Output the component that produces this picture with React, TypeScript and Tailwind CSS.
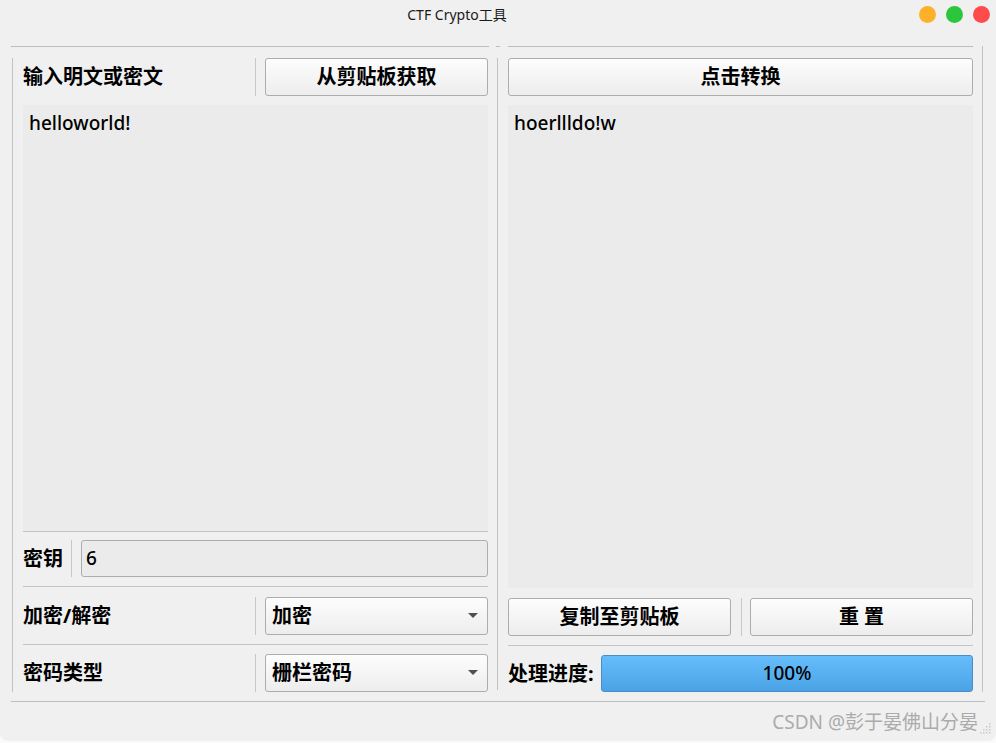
import React from "react";

const F = "font-['Noto_Sans','Noto_Sans_CJK_SC',sans-serif]";

function Btn({ children, className = "" }: { children: React.ReactNode; className?: string }) {
  return (
    <div
      className={`h-[38px] flex items-center justify-center rounded-[3px] border border-[#adadad] bg-linear-to-b from-[#fdfdfd] to-[#ededed] text-[20px] font-bold text-black leading-none ${className}`}
    >
      {children}
    </div>
  );
}

function Combo({ text }: { text: string }) {
  return (
    <div className="ml-[9px] w-[223px] h-[38px] flex items-center justify-between rounded-[3px] border border-[#adadad] bg-linear-to-b from-[#fdfdfd] to-[#ededed] pl-[6px] pr-[9px]">
      <span className="text-[20px] font-bold text-black leading-none">{text}</span>
      <svg width="10" height="6" viewBox="0 0 10 6">
        <path d="M0 0 L10 0 L5 5 Z" fill="#505050" />
      </svg>
    </div>
  );
}

const HLine = ({ className = "" }: { className?: string }) => (
  <div className={`h-px bg-[#c4c4c4] ${className}`} />
);
const VSep = ({ className = "" }: { className?: string }) => (
  <div className={`w-px self-stretch bg-[#c8c8c8] ${className}`} />
);

export default function App() {
  return (
    <div className={`w-[996px] h-[743px] bg-[#fafafa] overflow-hidden ${F}`}>
      <div className="h-[741px] bg-[#f0f0f0] rounded-b-[8px] flex flex-col">
        {/* title bar */}
        <div className="h-[28px] flex items-center">
          <div className="flex-1 text-center text-[14px] text-[#1a1a1a]">CTF Crypto工具</div>
          <div className="ml-[5px] mr-[6px] flex gap-[10px]">
            <div className="w-[17px] h-[17px] rounded-full bg-[#fdb12a]" />
            <div className="w-[17px] h-[17px] rounded-full bg-[#2bc63b]" />
            <div className="w-[17px] h-[17px] rounded-full bg-[#fe4c4c]" />
          </div>
        </div>

        {/* main */}
        <div className="mt-[18px] flex">
          <div className="w-[982px] flex flex-col">
            <div className="flex h-px">
              <div className="ml-[11px] w-[478px] bg-[#bdbdbd]" />
              <div className="ml-[7px] w-[4px] bg-[#bdbdbd]" />
              <div className="ml-[8px] w-[465px] bg-[#bdbdbd]" />
            </div>
            <div className="mt-[11px] ml-[12px] flex">
              {/* left panel */}
              <div className="w-[476px] border-l border-[#c2c2c2] pl-[10px] flex flex-col">
                <div className="h-[38px] flex items-center">
                  <div className="w-[232px] text-[20px] font-bold text-black">输入明文或密文</div>
                  <VSep />
                  <Btn className="ml-[9px] w-[223px]">从剪贴板获取</Btn>
                </div>
                <div className="mt-[9px] h-[426px] bg-[#ebebeb] px-[6px] pt-[6px]">
                  <div className="text-[19px] font-medium text-black leading-[24px]">helloworld!</div>
                </div>
                <HLine />
                <div className="mt-[8px] h-[37px] flex items-center">
                  <div className="w-[48px] text-[20px] font-bold text-black">密钥</div>
                  <VSep />
                  <div className="ml-[9px] flex-1 h-[37px] rounded-[3px] border border-[#adadad] bg-[#ebebeb] pl-[4px] flex items-center text-[19px] font-medium text-black">
                    6
                  </div>
                </div>
                <HLine className="mt-[9px]" />
                <div className="mt-[10px] h-[38px] flex items-center">
                  <div className="w-[232px] text-[20px] font-bold text-black">加密/解密</div>
                  <VSep />
                  <Combo text="加密" />
                </div>
                <HLine className="mt-[9px]" />
                <div className="mt-[9px] h-[38px] flex items-center">
                  <div className="w-[232px] text-[20px] font-bold text-black">密码类型</div>
                  <VSep />
                  <Combo text="栅栏密码" />
                </div>
              </div>

              {/* middle divider */}
              <div className="ml-[9px] w-px h-[632px] bg-[#c2c2c2]" />

              {/* right panel */}
              <div className="ml-[10px] w-[465px] flex flex-col">
                <Btn className="w-full">点击转换</Btn>
                <div className="mt-[9px] h-[483px] bg-[#ebebeb] px-[6px] pt-[6px]">
                  <div className="text-[19px] font-medium text-black leading-[24px]">hoerllldo!w</div>
                </div>
                <div className="mt-[10px] h-[38px] flex items-center">
                  <Btn className="w-[223px]">复制至剪贴板</Btn>
                  <VSep className="ml-[10px]" />
                  <Btn className="ml-[8px] w-[223px]">重&nbsp;置</Btn>
                </div>
                <HLine className="mt-[9px]" />
                <div className="mt-[9px] h-[37px] flex items-center">
                  <div className="w-[93px] text-[20px] font-bold text-black whitespace-nowrap">处理进度:</div>
                  <div className="flex-1 h-[37px] rounded-[3px] border border-[#4f8cc4] bg-linear-to-b from-[#66bdfb] to-[#4aa3e6] flex items-center justify-center text-[19px] font-medium text-black">
                    100%
                  </div>
                </div>
              </div>
            </div>
          </div>
          <div className="w-px h-[646px] bg-[#c2c2c2]" />
        </div>

        <div className="mt-[9px] ml-[11px] w-[974px] h-px bg-[#bdbdbd]" />

        <div className="mt-[8px] flex items-center justify-end pr-[4px]">
          <div className="text-[19px] leading-[24px] text-[#ababab]">CSDN @彭于晏佛山分晏</div>
          <svg width="12" height="12" viewBox="0 0 12 12" className="ml-[2px] mt-[12px]">
            <g fill="#c8c8c8">
              <rect x="9" y="1" width="1.5" height="1.5" />
              <rect x="6" y="4" width="1.5" height="1.5" />
              <rect x="9" y="4" width="1.5" height="1.5" />
              <rect x="3" y="7" width="1.5" height="1.5" />
              <rect x="6" y="7" width="1.5" height="1.5" />
              <rect x="9" y="7" width="1.5" height="1.5" />
              <rect x="0" y="10" width="1.5" height="1.5" />
              <rect x="3" y="10" width="1.5" height="1.5" />
              <rect x="6" y="10" width="1.5" height="1.5" />
              <rect x="9" y="10" width="1.5" height="1.5" />
            </g>
          </svg>
        </div>
      </div>
    </div>
  );
}
